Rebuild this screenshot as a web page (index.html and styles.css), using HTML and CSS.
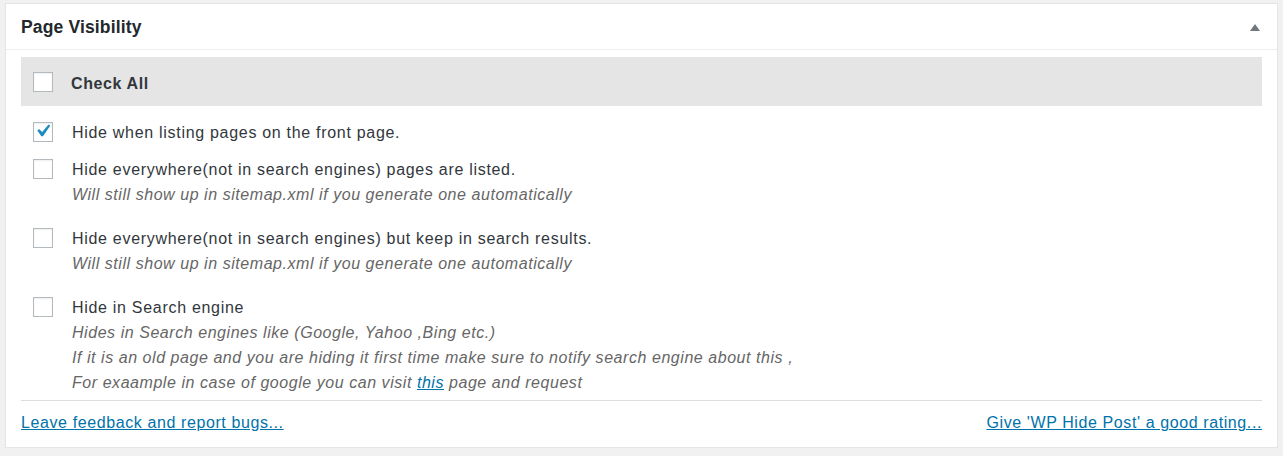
FILE: index.html
```html
<!DOCTYPE html>
<html lang="en">
<head>
<meta charset="utf-8">
<title>Page Visibility</title>
<link rel="stylesheet" href="styles.css">
</head>
<body>
<div class="postbox">
  <div class="postbox-header">
    <h2 class="postbox-title">Page Visibility</h2>
    <span class="toggle-arrow"></span>
  </div>
  <div class="inside">
    <div class="check-all">
      <span class="checkbox"></span>
      <span class="check-all-label">Check All</span>
    </div>
    <div class="options">
      <div class="option">
        <span class="checkbox checked"><svg viewBox="3.1 3.6 14.5 14.5" width="18" height="18"><path fill="#1e8cbe" d="M14.83 4.89l1.34.94-5.81 8.38H9.02L5.78 9.67l1.34-1.25 2.57 2.4z"/></svg></span>
        <div class="option-text">
          <div class="label">Hide when listing pages on the front page.</div>
        </div>
      </div>
      <div class="option">
        <span class="checkbox"></span>
        <div class="option-text">
          <div class="label">Hide everywhere(not in search engines) pages are listed.</div>
          <div class="desc">Will still show up in sitemap.xml if you generate one automatically</div>
        </div>
      </div>
      <div class="option">
        <span class="checkbox"></span>
        <div class="option-text">
          <div class="label">Hide everywhere(not in search engines) but keep in search results.</div>
          <div class="desc">Will still show up in sitemap.xml if you generate one automatically</div>
        </div>
      </div>
      <div class="option">
        <span class="checkbox"></span>
        <div class="option-text">
          <div class="label">Hide in Search engine</div>
          <div class="desc">Hides in Search engines like (Google, Yahoo ,Bing etc.)<br>If it is an old page and you are hiding it first time make sure to notify search engine about this ,<br>For exaample in case of google you can visit <a href="#">this</a> page and request</div>
        </div>
      </div>
    </div>
    <div class="footer">
      <a href="#">Leave feedback and report bugs...</a>
      <a href="#">Give 'WP Hide Post' a good rating...</a>
    </div>
  </div>
</div>
</body>
</html>
```

FILE: styles.css
```css
html, body {
  margin: 0;
  padding: 0;
}
body {
  background: #f1f1f1;
  font-family: "Liberation Sans", Arial, sans-serif;
  font-size: 16px;
  color: #32373c;
  padding-top: 3px;
}
.postbox {
  margin: 0 5px;
  background: #fff;
  border: 1px solid #e5e5e5;
  box-shadow: 0 1px 1px rgba(0, 0, 0, 0.04);
}
.postbox-header {
  height: 45px;
  border-bottom: 1px solid #eeeeee;
  display: flex;
  align-items: center;
  justify-content: space-between;
  padding: 0 17px 0 15px;
}
.postbox-title {
  margin: 0;
  font-size: 17.5px;
  font-weight: bold;
  color: #23282d;
  letter-spacing: 0.15px;
  padding-top: 1px;
}
.toggle-arrow {
  width: 0;
  height: 0;
  border-left: 5px solid transparent;
  border-right: 5px solid transparent;
  border-bottom: 7px solid #72777c;
  margin-top: 1px;
}
.inside {
  padding: 7px 15px 12px;
}
.check-all {
  height: 49px;
  background: #e5e5e5;
  display: flex;
  align-items: center;
  padding-left: 12px;
}
.check-all .checkbox {
  margin-top: 1px;
}
.check-all-label {
  margin-left: 18px;
  padding-top: 4px;
  font-weight: bold;
  letter-spacing: 0.6px;
  color: #32373c;
}
.checkbox {
  flex: none;
  width: 18px;
  height: 18px;
  border: 1px solid #b4b9be;
  background: #fff;
  box-shadow: inset 0 1px 2px rgba(0, 0, 0, 0.07);
  display: flex;
}
.options {
  padding-top: 14px;
}
.option {
  display: flex;
  align-items: flex-start;
  margin-bottom: 12px;
}
.option .checkbox {
  margin: 2px 19px 0 12px;
}
.option-text {
  line-height: 25px;
}
.label {
  letter-spacing: 0.7px;
}
.desc {
  font-style: italic;
  color: #666;
  letter-spacing: 0.55px;
  margin-bottom: 7px;
}
.option:last-child {
  margin-bottom: 0;
}
.option:last-child .desc {
  margin-bottom: 0;
}
a {
  color: #0073aa;
  text-decoration: underline;
}
.footer {
  margin-top: 5px;
  border-top: 1px solid #dddddd;
  padding-top: 10px;
  display: flex;
  justify-content: space-between;
  line-height: 24px;
  letter-spacing: 0.6px;
}
```
